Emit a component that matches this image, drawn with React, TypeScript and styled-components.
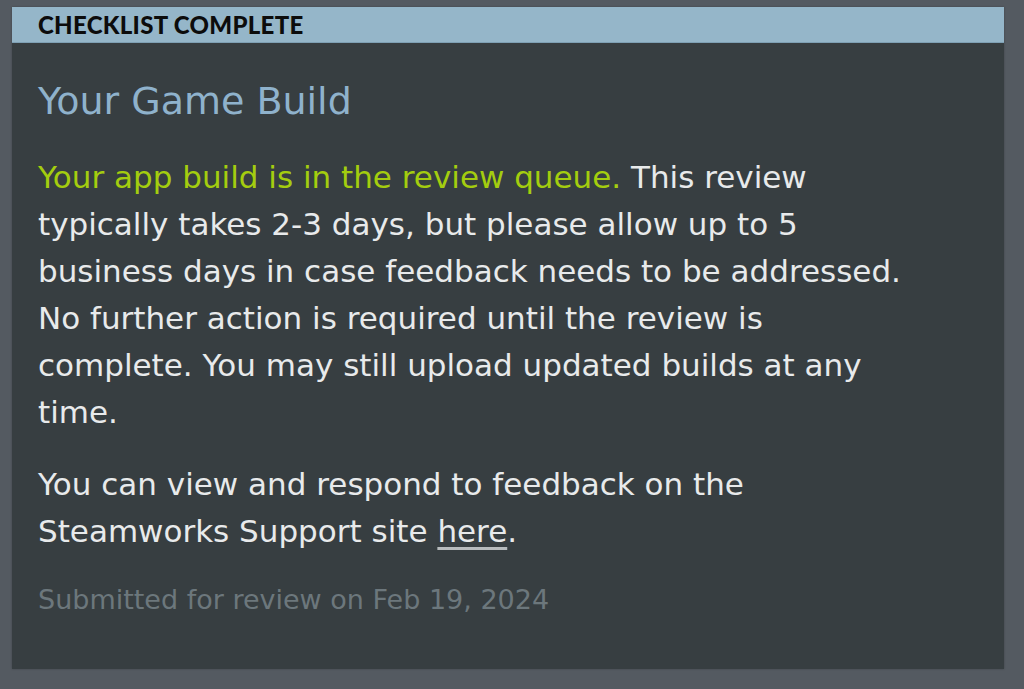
import React from 'react';
import styled, { createGlobalStyle } from 'styled-components';

const GlobalStyle = createGlobalStyle`
  html, body {
    margin: 0;
    padding: 0;
    background: #545a61;
  }
`;

const Page = styled.div`
  padding: 7px 20px 20px 12px;
`;

const Card = styled.div`
  width: 992px;
  height: 662px;
  background: #373e41;
  box-shadow: 0 0 2px rgba(0, 0, 0, 0.25);
  font-family: 'DejaVu Sans', Verdana, sans-serif;
`;

const HeaderBar = styled.div`
  height: 36px;
  background: #95b6c9;
  border-bottom: 1px solid #7fa0b4;
  box-sizing: border-box;
  padding-left: 26px;
  display: flex;
  align-items: center;
  font-family: Lato, 'Noto Sans', sans-serif;
  font-weight: 900;
  font-size: 24px;
  letter-spacing: 0.3px;
  color: #0c0c0c;
`;

const Body = styled.div`
  padding: 35px 26px 0 26px;
`;

const Title = styled.div`
  font-size: 38px;
  line-height: 46px;
  color: #8fb2cc;
  margin-bottom: 30px;
`;

const Paragraph = styled.p`
  margin: 0 0 25px 0;
  max-width: 872px;
  font-size: 31px;
  line-height: 47px;
  color: #e8eaeb;
`;

const Highlight = styled.span`
  color: #a4cd0f;
`;

const Link = styled.a`
  color: #e8eaeb;
  text-decoration: underline;
  text-decoration-color: #b8bcbe;
  text-underline-offset: 5px;
`;

const Submitted = styled.div`
  margin-top: 25px;
  font-size: 27px;
  line-height: 40px;
  color: #6c777c;
`;

export default function App() {
  return (
    <>
      <GlobalStyle />
      <Page>
        <Card>
          <HeaderBar>CHECKLIST COMPLETE</HeaderBar>
          <Body>
            <Title>Your Game Build</Title>
            <Paragraph>
              <Highlight>Your app build is in the review queue.</Highlight> This review
              typically takes 2-3 days, but please allow up to 5 business days in case
              feedback needs to be addressed. No further action is required until the
              review is complete. You may still upload updated builds at any time.
            </Paragraph>
            <Paragraph>
              You can view and respond to feedback on the Steamworks Support site{' '}
              <Link href="#">here</Link>.
            </Paragraph>
            <Submitted>Submitted for review on Feb 19, 2024</Submitted>
          </Body>
        </Card>
      </Page>
    </>
  );
}
